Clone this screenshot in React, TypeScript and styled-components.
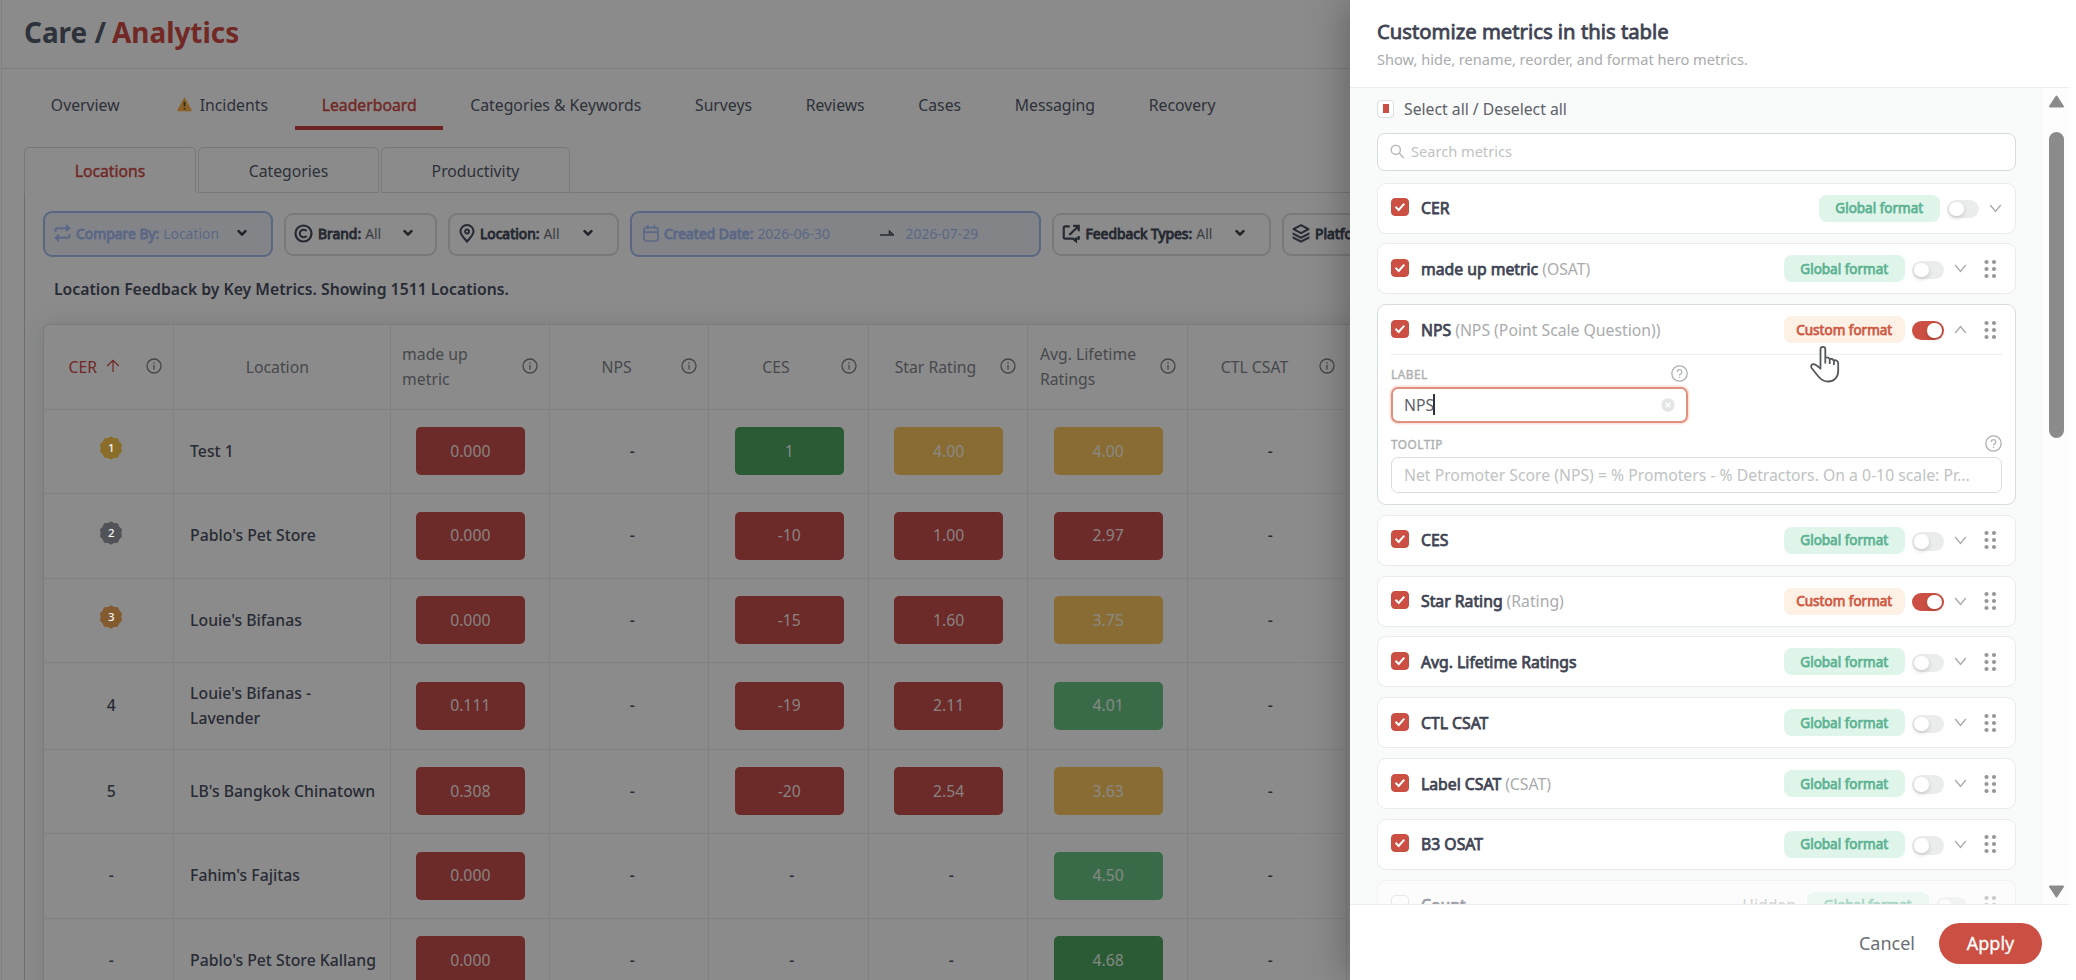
import React from "react";
import styled, { createGlobalStyle, css } from "styled-components";

const GlobalStyle = createGlobalStyle`
  *, *::before, *::after { box-sizing: border-box; }
  html, body { margin: 0; padding: 0; background: #fff; }
  body { overflow: hidden; font-family: "Noto Sans", "Open Sans", sans-serif; font-size: 15.75px; color: #3f4453; }
`;

/* ---------- page ---------- */

const Page = styled.div`
  position: relative;
  width: 2076px;
  height: 980px;
  overflow: hidden;
  background: #fff;
`;

const Content = styled.div`
  height: 980px;
  margin-left: 1px;
  border-left: 1px solid #ececec;
  display: flex;
  flex-direction: column;
`;

const TopBar = styled.header`
  flex: none;
  height: 69px;
  padding: 0 0 4px 22px;
  display: flex;
  align-items: center;
  gap: 6px;
  border-bottom: 1px solid #e6e6e6;
  font-size: 27.9px;
  font-weight: 700;
  color: #545c6d;
`;

const Accent = styled.span`
  color: #d14b47;
`;

const TabBar = styled.nav`
  flex: none;
  display: flex;
  height: 61px;
  margin: 0 0 17px 22px;
  padding-top: 12px;
`;

const Tab = styled.button<{ $active?: boolean }>`
  display: flex;
  align-items: center;
  gap: 8px;
  padding: 2px 26.85px 0;
  border: 0;
  border-bottom: 4.5px solid ${(p) => (p.$active ? "#c8413d" : "transparent")};
  background: none;
  font: inherit;
  color: ${(p) => (p.$active ? "#d04945" : "#545a6b")};
  ${(p) => p.$active && css`-webkit-text-stroke: 0.4px #d04945;`}
`;

const SubTabs = styled.div`
  flex: none;
  display: flex;
  gap: 2px;
  height: 46px;
  margin-left: 22px;
`;

const SubTab = styled.button<{ $active?: boolean; $w: number }>`
  width: ${(p) => p.$w}px;
  padding: 2px 0 0;
  border: 1px solid #dedede;
  border-bottom-color: ${(p) => (p.$active ? "transparent" : "#dedede")};
  border-radius: 5px 5px 0 0;
  background: none;
  font: inherit;
  color: ${(p) => (p.$active ? "#d04945" : "#545a6b")};
  ${(p) => p.$active && css`-webkit-text-stroke: 0.4px #d04945;`}
`;

const SubTabsRest = styled.div`
  flex: 1;
  margin-left: -2px;
  border-bottom: 1px solid #dedede;
`;

const Panel = styled.main`
  flex: 1;
  margin-left: 22px;
  padding: 18px 0 0 18px;
  border-left: 1px solid #c9c9c9;
`;

const Filters = styled.div`
  display: flex;
  align-items: center;
  gap: 11px;
  height: 46px;
`;

const Filter = styled.div<{ $w: number; $active?: boolean }>`
  flex: none;
  width: ${(p) => p.$w}px;
  height: ${(p) => (p.$active ? 46 : 43)}px;
  display: flex;
  align-items: center;
  padding: 0 0 1.5px ${(p) => (p.$active ? 9 : 8)}px;
  border: ${(p) => (p.$active ? "2px solid #a6bdf0" : "2px solid #dfdfdf")};
  border-radius: 9px;
  background: ${(p) => (p.$active ? "#eff3f8" : "#fff")};
  color: ${(p) => (p.$active ? "#a8bef6" : "#454b5c")};
  font-size: 13.9px;
  white-space: nowrap;
  svg { flex: none; }
`;

const FilterName = styled.b`
  margin-left: 5px;
  font-weight: 400;
  -webkit-text-stroke: 0.9px currentColor;
`;

const FilterValue = styled.span<{ $w?: number; $active?: boolean }>`
  margin-left: 4px;
  width: ${(p) => (p.$w ? p.$w + "px" : "auto")};
  color: ${(p) => (p.$active ? "inherit" : "#6b6f7a")};
`;

const Summary = styled.h2`
  margin: 0;
  padding: 19px 0 0 11px;
  height: 67px;
  font-size: 15.75px;
  line-height: 26px;
  font-weight: 600;
  color: #4a5062;
`;

const Table = styled.div`
  width: 1500px;
  height: 800px;
  border-left: 1px solid #e2e2e2;
  border-top: 1px solid #e2e2e2;
  border-radius: 6px 0 0 0;
  box-shadow: 0 0 22px rgba(40, 60, 80, 0.15);
`;

const Row = styled.div<{ $h: number }>`
  display: grid;
  grid-template-columns: 129.6px 217px 159.4px 159.5px 159.5px 159.5px 159.5px 159.5px;
  height: ${(p) => p.$h}px;
`;

const Cell = styled.div`
  display: flex;
  align-items: center;
  justify-content: center;
  border-right: 1px solid #ececec;
  border-bottom: 1px solid #ececec;
  padding: 0;
  line-height: 25px;
  color: #4a5062;
`;

const PlainCell = styled(Cell)`
  padding-left: 6px;
  font-weight: 500;
`;

const ScoreCell = styled(Cell)`
  padding-left: 1px;
`;

const NameCell = styled(Cell)`
  justify-content: flex-start;
  padding-left: 16.5px;
  font-weight: 500;
`;

const HeadCell = styled(Cell)<{ $noInfo?: boolean }>`
  padding: 1px ${(p) => (p.$noInfo ? 20 : 11)}px 0 11.5px;
  gap: 10px;
  color: #82868e;
  svg { flex: none; margin-bottom: 2px; }
`;

const SortedHeadCell = styled(HeadCell)`
  padding-left: 24.5px;
  gap: 9px;
  justify-content: flex-start;
  color: #d04945;
  svg:last-child { margin-left: auto; }
`;

const HeadText = styled.span<{ $wrap?: boolean }>`
  flex: 1;
  text-align: ${(p) => (p.$wrap ? "left" : "center")};
`;

const Score = styled.div<{ $tone: Tone }>`
  width: 109px;
  height: 48px;
  display: flex;
  align-items: center;
  justify-content: center;
  border-radius: 5px;
  background: ${(p) => tones[p.$tone]};
  color: rgba(255, 255, 255, 0.92);
`;

const Overlay = styled.div`
  position: absolute;
  inset: 0;
  background: rgba(0, 0, 0, 0.455);
`;

/* ---------- drawer ---------- */

const Drawer = styled.aside`
  position: absolute;
  top: 0;
  right: 0;
  width: 726px;
  height: 980px;
  display: flex;
  flex-direction: column;
  background: #fff;
  box-shadow: -6px 0 36px rgba(0, 0, 0, 0.26);
`;

const DrawerHead = styled.header`
  flex: none;
  height: 88px;
  margin-right: 7px;
  padding: 17px 0 0 27px;
  border-bottom: 1px solid #eceeee;
`;

const DrawerTitle = styled.h1`
  margin: 0;
  font-size: 20.25px;
  line-height: 28px;
  font-weight: 400;
  -webkit-text-stroke: 0.8px currentColor;
`;

const DrawerSub = styled.p`
  margin: 3px 0 0;
  font-size: 14.6px;
  line-height: 22px;
  color: #a9abad;
`;

const DrawerMain = styled.div`
  flex: none;
  display: flex;
  height: 816px;
  margin-right: 7px;
`;

const DrawerBody = styled.div`
  width: 693px;
  height: 816px;
  overflow: hidden;
  padding: 8px 27px 0;
  background: #f9fafa;
`;

const Scrollbar = styled.div`
  width: 26px;
  padding: 7px 0 6px;
  display: flex;
  flex-direction: column;
  align-items: center;
  justify-content: space-between;
  background: #fdfdfd;
`;

const ScrollThumb = styled.div`
  width: 15px;
  height: 306px;
  margin: 24px 0 auto;
  border-radius: 8px;
  background: #8b8b8b;
`;

const SelectAll = styled.label`
  display: flex;
  align-items: center;
  gap: 10px;
  height: 26px;
  color: #5d6168;
`;

const PartialBox = styled.span`
  width: 17px;
  height: 18px;
  display: flex;
  align-items: center;
  justify-content: center;
  margin-bottom: 1px;
  border: 1px solid #dcdfdf;
  border-radius: 4px;
  background: #fff;
  &::after { content: ""; width: 6px; height: 9px; background: #cb4f42; }
`;

const Search = styled.div`
  display: flex;
  align-items: center;
  gap: 6px;
  height: 38px;
  margin-top: 11px;
  padding: 0 0 2px 12px;
  border: 1px solid #d9dcdc;
  border-radius: 8px;
  background: #fff;
  font-size: 14.6px;
  color: #c0c3c3;
`;

const Cards = styled.div`
  display: flex;
  flex-direction: column;
  gap: 9.8px;
  margin-top: 11.5px;
`;

const Card = styled.section<{ $open?: boolean; $dim?: boolean }>`
  border: 1px solid ${(p) => (p.$open ? "#d9dcdc" : "#eaecec")};
  border-radius: 9px;
  background: #fff;
  padding: 0 13px;
  opacity: ${(p) => (p.$dim ? 0.5 : 1)};
`;

const CardRow = styled.div`
  display: flex;
  align-items: center;
  height: 49px;
`;

const Checkbox = styled.span<{ $on: boolean }>`
  flex: none;
  width: 18px;
  height: 18px;
  display: flex;
  align-items: center;
  justify-content: center;
  margin-bottom: 2px;
  border-radius: 4px;
  border: 1px solid ${(p) => (p.$on ? "#cb4f42" : "#d5d8d8")};
  background: ${(p) => (p.$on ? "#cb4f42" : "#fff")};
`;

const Name = styled.span`
  margin-left: 12px;
  -webkit-text-stroke: 0.75px currentColor;
`;

const Origin = styled.span`
  margin-left: 4px;
  color: #a9abad;
`;

const Tools = styled.div<{ $fixed?: boolean }>`
  margin-left: auto;
  padding-right: ${(p) => (p.$fixed ? 0 : 5.5)}px;
  display: flex;
  align-items: center;
`;

const HiddenNote = styled.span`
  margin-right: 11px;
  color: #a9abad;
`;

const Badge = styled.span<{ $custom?: boolean }>`
  width: 121.5px;
  height: 27px;
  display: flex;
  align-items: center;
  justify-content: center;
  border-radius: 8px;
  font-size: 13.5px;
  background: ${(p) => (p.$custom ? "#fdf1e6" : "#dff5e9")};
  color: ${(p) => (p.$custom ? "#cf5a45" : "#5db393")};
  -webkit-text-stroke: 0.75px currentColor;
`;

const Switch = styled.span<{ $on?: boolean }>`
  width: 31.5px;
  height: 18.5px;
  margin: 2px 0 0 7px;
  padding: 2px;
  display: flex;
  justify-content: ${(p) => (p.$on ? "flex-end" : "flex-start")};
  border-radius: 10px;
  background: ${(p) => (p.$on ? "#cb4f42" : "#ebecec")};
  &::after {
    content: "";
    width: 14.5px;
    height: 14.5px;
    border-radius: 50%;
    background: #fff;
    box-shadow: 0 2px 4px rgba(0, 0, 0, 0.16);
  }
`;

const Icon = styled.svg<{ $ml?: number }>`
  flex: none;
  display: block;
  margin-left: ${(p) => p.$ml || 0}px;
`;

const Editor = styled.div`
  height: 150px;
  padding-top: 9px;
  border-top: 1px solid #eceeee;
`;

const FieldHead = styled.div<{ $w?: number }>`
  display: flex;
  align-items: center;
  justify-content: space-between;
  width: ${(p) => (p.$w ? p.$w + "px" : "auto")};
  height: 19px;
  font-size: 11.8px;
  letter-spacing: 0.5px;
  color: #aeb1b1;
`;

const FieldName = styled.span`
  -webkit-text-stroke: 0.4px currentColor;
`;

const Field = styled.div<{ $w?: number; $focus?: boolean }>`
  display: flex;
  align-items: center;
  justify-content: space-between;
  width: ${(p) => (p.$w ? p.$w + "px" : "auto")};
  height: 36px;
  margin: 4px 0 11px;
  padding: 0 ${(p) => (p.$focus ? 11 : 12)}px 0.5px;
  border: ${(p) => (p.$focus ? "2px solid #e0907f" : "1px solid #d9dcdc")};
  border-radius: 7px;
  box-shadow: ${(p) => (p.$focus ? "0 0 0 1.5px #fae3dc" : "none")};
  color: ${(p) => (p.$focus ? "#5d6168" : "#c0c3c3")};
  white-space: nowrap;
`;

const Caret = styled.span`
  display: inline-block;
  width: 2px;
  height: 21px;
  margin-left: -1px;
  vertical-align: -4px;
  background: #2d3140;
`;

const DrawerFoot = styled.footer`
  flex: 1;
  display: flex;
  align-items: center;
  justify-content: flex-end;
  gap: 24px;
  margin-right: 7px;
  padding: 1px 27px 0 0;
  border-top: 1px solid #eceeee;
  font-size: 18px;
`;

const CancelButton = styled.button`
  border: 0;
  padding: 0 0 1px;
  background: none;
  font: inherit;
  color: #6a6e74;
`;

const ApplyButton = styled.button`
  width: 103px;
  height: 41px;
  border: 0;
  padding: 0 0 1px;
  border-radius: 21px;
  background: #cb4f42;
  font: inherit;
  color: #fff;
  -webkit-text-stroke: 0.3px #fff;
`;

const Pointer = styled.svg`
  position: absolute;
  left: 1809px;
  top: 345px;
`;

/* ---------- icons ---------- */

const Warning = () => (
  <Icon $ml={3.5} width="15" height="15" viewBox="0 0 15 15">
    <path d="M7.5 1.2 14.2 13.6H.8z" fill="#ffb545" stroke="#ffb545" strokeWidth="1.2" strokeLinejoin="round" />
    <path d="M7.5 4.8v4.800M7.500 11v1.600" stroke="#5a4545" strokeWidth="1.600" />
  </Icon>
);

const FilterChevron = ({ ml }: { ml: number }) => (
  <Icon $ml={ml} width="10" height="8" viewBox="0 0 10 8">
    <path d="M1.600 2.200 5 5.600 8.400 2.200" fill="none" stroke="#3a3f4c" strokeWidth="2.500" strokeLinecap="round" strokeLinejoin="round" />
  </Icon>
);

const CompareIcon = () => (
  <Icon width="17" height="18" viewBox="0 0 17 18" fill="none" stroke="currentColor" strokeWidth="2">
    <path d="M1.500 8V6.200A2 2 0 0 1 3.500 4.200H15M12 1l3.200 3.200L12 7.400M15.500 10v1.800a2 2 0 0 1-2 2H2M5 10.600 1.800 13.800 5 17" />
  </Icon>
);

const BrandIcon = () => (
  <Icon width="19" height="19" viewBox="0 0 19 19" fill="none" stroke="currentColor">
    <circle cx="9.500" cy="9.500" r="8" strokeWidth="2.200" />
    <path d="M12.600 7.200a3.800 3.800 0 1 0 0 4.600" strokeWidth="2" />
  </Icon>
);

const PinIcon = () => (
  <Icon $ml={1} width="16" height="19" viewBox="0 0 16 19" fill="none" stroke="currentColor">
    <path d="M8 17.500C5 13.800 1.500 11 1.500 7.500a6.500 6.500 0 0 1 13 0C14.500 11 11 13.800 8 17.500z" strokeWidth="2" />
    <circle cx="8" cy="7.500" r="2" strokeWidth="1.800" />
  </Icon>
);

const CalendarIcon = () => (
  <Icon $ml={2} width="16" height="17" viewBox="0 0 16 17" fill="none" stroke="currentColor" strokeWidth="1.700">
    <rect x="1" y="2.500" width="14" height="13.500" rx="2.500" />
    <path d="M1 7.200h14M4.700 0v4M11.300 0v4" />
  </Icon>
);

const FeedbackIcon = () => (
  <Icon width="18.500" height="19" viewBox="0 0 19 19" fill="none" stroke="currentColor" strokeWidth="2.200">
    <path d="M8 2.200H3.300a1.500 1.500 0 0 0-1.500 1.500v9.600a1.500 1.500 0 0 0 1.500 1.500h7.900l3.200 2.600v-2.600h2.800V12M7.500 11 16.500 2.200M11.500 1.600h5.700v5.700" />
  </Icon>
);

const LayersIcon = () => (
  <Icon width="18" height="19" viewBox="0 0 18 19">
    <path d="M9 1.200 16.500 5.200 9 9.200 1.500 5.200z" fill="none" stroke="currentColor" strokeWidth="2" strokeLinejoin="round" />
    <path d="M.8 8.600 9 12.800l8.200-4.200v2L9 14.800.8 10.600zM.8 12.400 9 16.600l8.200-4.200v2L9 18.600.8 14.400z" fill="currentColor" stroke="currentColor" strokeWidth=".3" />
  </Icon>
);

const RangeArrow = () => (
  <Icon width="14" height="8" viewBox="0 0 14 8">
    <path d="M0 6h13.500L9.500 2.200V6" fill="none" stroke="#4a4e5e" strokeWidth="1.500" />
  </Icon>
);

const InfoIcon = () => (
  <Icon width="16" height="16" viewBox="0 0 16 16" fill="none" stroke="#7c8087">
    <circle cx="8" cy="8" r="7" strokeWidth="1.300" />
    <path d="M8 7v4.500M8 4.300v1.500" strokeWidth="1.300" />
  </Icon>
);

const SortUp = () => (
  <Icon width="14" height="14" viewBox="0 0 14 14" fill="none" stroke="#d04945" strokeWidth="1.200">
    <path d="M7 13V1.500M1.200 7 7 1.300 12.800 7" />
  </Icon>
);

const MedalWrap = styled.span`
  display: grid;
  place-items: center;
  margin-bottom: 6px;
  > * { grid-area: 1 / 1; }
`;

const MedalNumber = styled.span`
  font-size: 11.500px;
  line-height: 14px;
  color: #f4f4f4;
  z-index: 1;
`;

const Medal = ({ n, color }: { n: number; color: string }) => (
  <MedalWrap>
    <Icon width="24" height="24" viewBox="0 0 24 24">
      <path
        d="M12 .8l3 1.700 3.600.2 1.400 3.200 2.600 2.400-.8 3.700.8 3.700-2.600 2.300-1.400 3.300-3.600.2-3 1.700-3-1.700-3.600-.2L4 18l-2.600-2.300.8-3.700-.8-3.700L4 5.900l1.400-3.200L9 2.500z"
        fill={color}
        stroke={color}
        strokeLinejoin="round"
      />
    </Icon>
    <MedalNumber>{n}</MedalNumber>
  </MedalWrap>
);

const SearchIcon = () => (
  <Icon width="15" height="15" viewBox="0 0 15 15" fill="none" stroke="#b7bbbb" strokeWidth="1.500">
    <circle cx="5.800" cy="5.800" r="4.600" />
    <path d="m9.300 9.300 4.500 4.700" />
  </Icon>
);

const Check = () => (
  <svg width="12" height="10" viewBox="0 0 12 10" fill="none" stroke="#fff" strokeWidth="2">
    <path d="M1.500 4.800 4.700 8l5.600-6.400" />
  </svg>
);

const Chevron = ({ up }: { up?: boolean }) => (
  <Icon $ml={10.5} width="13" height="9" viewBox="0 0 13 9" fill="none" stroke="#a9acac" strokeWidth="1.400">
    <path d={up ? "M1.200 8 6.500 1.500 11.800 8" : "M1.200 1 6.500 7.500 11.800 1"} />
  </Icon>
);

const Drag = () => (
  <Icon $ml={16.5} width="13" height="20" viewBox="0 0 13 20" fill="#94979b">
    {[3, 10, 17].map((y) => (
      <React.Fragment key={y}>
        <circle cx="2.500" cy={y} r="2.100" />
        <circle cx="10" cy={y} r="2.100" />
      </React.Fragment>
    ))}
  </Icon>
);

const Help = () => (
  <Icon width="17" height="17" viewBox="0 0 17 17" fill="none" stroke="#aeb1b1" strokeWidth="1.300">
    <circle cx="8.500" cy="8.500" r="7.700" />
    <path d="M6.200 6.900a2.300 2.300 0 1 1 3.400 2c-.8.400-1.100.7-1.100 1.500M8.500 11.700v1.400" />
  </Icon>
);

const Clear = () => (
  <Icon width="14" height="14" viewBox="0 0 14 14">
    <circle cx="7" cy="7" r="6.700" fill="#e4e6e6" />
    <path d="m4.800 4.800 4.400 4.400M9.200 4.800 4.800 9.200" stroke="#fff" strokeWidth="1.300" />
  </Icon>
);

const ScrollArrow = ({ down }: { down?: boolean }) => (
  <Icon width="17" height="13" viewBox="0 0 17 13">
    <path
      d={down ? "M2 1.500h13L8.500 11.500z" : "M2 11.500h13L8.500 1.500z"}
      fill="#8b8b8b"
      stroke="#8b8b8b"
      strokeWidth="2"
      strokeLinejoin="round"
    />
  </Icon>
);

/* ---------- data ---------- */

type Tone = "red" | "green" | "mint" | "yellow";

const tones: Record<Tone, string> = {
  red: "#c74d4a",
  green: "#50a860",
  mint: "#6bc585",
  yellow: "#f9c760",
};

type Value = [string, Tone] | null;

const columns: { label: React.ReactNode; wrap?: boolean }[] = [
  { label: <>made up<br />metric</>, wrap: true },
  { label: "NPS" },
  { label: "CES" },
  { label: "Star Rating" },
  { label: <>Avg. Lifetime<br />Ratings</>, wrap: true },
  { label: "CTL CSAT" },
];

const rows: { rank: React.ReactNode; name: React.ReactNode; h: number; values: Value[] }[] = [
  { rank: <Medal n={1} color="#ffc94f" />, name: "Test 1", h: 84.5, values: [["0.000", "red"], null, ["1", "green"], ["4.00", "yellow"], ["4.00", "yellow"], null] },
  { rank: <Medal n={2} color="#9599a4" />, name: "Pablo's Pet Store", h: 84.5, values: [["0.000", "red"], null, ["-10", "red"], ["1.00", "red"], ["2.97", "red"], null] },
  { rank: <Medal n={3} color="#f2a556" />, name: "Louie's Bifanas", h: 84.5, values: [["0.000", "red"], null, ["-15", "red"], ["1.60", "red"], ["3.75", "yellow"], null] },
  { rank: "4", name: <>Louie's Bifanas -<br />Lavender</>, h: 86.5, values: [["0.111", "red"], null, ["-19", "red"], ["2.11", "red"], ["4.01", "mint"], null] },
  { rank: "5", name: "LB's Bangkok Chinatown", h: 84.5, values: [["0.308", "red"], null, ["-20", "red"], ["2.54", "red"], ["3.63", "yellow"], null] },
  { rank: "-", name: "Fahim's Fajitas", h: 84.5, values: [["0.000", "red"], null, null, null, ["4.50", "mint"], null] },
  { rank: "-", name: "Pablo's Pet Store Kallang", h: 84.5, values: [["0.000", "red"], null, null, null, ["4.68", "green"], null] },
];

type Metric = { name: string; origin?: string; custom?: boolean; fixed?: boolean; open?: boolean; hidden?: boolean };

const metrics: Metric[] = [
  { name: "CER", fixed: true },
  { name: "made up metric", origin: "(OSAT)" },
  { name: "NPS", origin: "(NPS (Point Scale Question))", custom: true, open: true },
  { name: "CES" },
  { name: "Star Rating", origin: "(Rating)", custom: true },
  { name: "Avg. Lifetime Ratings" },
  { name: "CTL CSAT" },
  { name: "Label CSAT", origin: "(CSAT)" },
  { name: "B3 OSAT" },
  { name: "Count", hidden: true },
];

const MetricCard = ({ m }: { m: Metric }) => (
  <Card $open={m.open} $dim={m.hidden}>
    <CardRow>
      <Checkbox $on={!m.hidden}>{!m.hidden && <Check />}</Checkbox>
      <Name>{m.name}</Name>
      {m.origin && <Origin>{m.origin}</Origin>}
      <Tools $fixed={m.fixed}>
        {m.hidden && <HiddenNote>Hidden</HiddenNote>}
        <Badge $custom={m.custom}>{m.custom ? "Custom format" : "Global format"}</Badge>
        <Switch $on={m.custom} />
        {!m.hidden && <Chevron up={m.open} />}
        {!m.fixed && <Drag />}
      </Tools>
    </CardRow>
    {m.open && (
      <Editor>
        <FieldHead $w={297}>
          <FieldName>LABEL</FieldName>
          <Help />
        </FieldHead>
        <Field $w={297} $focus>
          <span>NPS<Caret /></span>
          <Clear />
        </Field>
        <FieldHead>
          <FieldName>TOOLTIP</FieldName>
          <Help />
        </FieldHead>
        <Field>Net Promoter Score (NPS) = % Promoters - % Detractors. On a 0-10 scale: Pr...</Field>
      </Editor>
    )}
  </Card>
);

export default function App() {
  return (
    <Page>
      <GlobalStyle />
      <Content>
        <TopBar>
          <span>Care /</span>
          <Accent>Analytics</Accent>
        </TopBar>
        <TabBar>
          <Tab>Overview</Tab>
          <Tab><Warning />Incidents</Tab>
          <Tab $active>Leaderboard</Tab>
          <Tab>Categories &amp; Keywords</Tab>
          <Tab>Surveys</Tab>
          <Tab>Reviews</Tab>
          <Tab>Cases</Tab>
          <Tab>Messaging</Tab>
          <Tab>Recovery</Tab>
        </TabBar>
        <SubTabs>
          <SubTab $active $w={172}>Locations</SubTab>
          <SubTab $w={181}>Categories</SubTab>
          <SubTab $w={189}>Productivity</SubTab>
          <SubTabsRest />
        </SubTabs>
        <Panel>
          <Filters>
            <Filter $active $w={230}>
              <CompareIcon />
              <FilterName>Compare By:</FilterName>
              <FilterValue $active>Location</FilterValue>
              <FilterChevron ml={18} />
            </Filter>
            <Filter $w={153}>
              <BrandIcon />
              <FilterName>Brand:</FilterName>
              <FilterValue>All</FilterValue>
              <FilterChevron ml={22} />
            </Filter>
            <Filter $w={171}>
              <PinIcon />
              <FilterName>Location:</FilterName>
              <FilterValue>All</FilterValue>
              <FilterChevron ml={23} />
            </Filter>
            <Filter $active $w={411}>
              <CalendarIcon />
              <FilterName>Created Date:</FilterName>
              <FilterValue $active $w={123}>2026-06-30</FilterValue>
              <RangeArrow />
              <FilterValue $active>&nbsp; 2026-07-29</FilterValue>
            </Filter>
            <Filter $w={219}>
              <FeedbackIcon />
              <FilterName>Feedback Types:</FilterName>
              <FilterValue>All</FilterValue>
              <FilterChevron ml={23} />
            </Filter>
            <Filter $w={180}>
              <LayersIcon />
              <FilterName>Platforms:</FilterName>
              <FilterValue>All</FilterValue>
            </Filter>
          </Filters>
          <Summary>Location Feedback by Key Metrics. Showing 1511 Locations.</Summary>
          <Table>
            <Row $h={84.5}>
              <SortedHeadCell>
                <span>CER</span>
                <SortUp />
                <InfoIcon />
              </SortedHeadCell>
              <HeadCell $noInfo><HeadText>Location</HeadText></HeadCell>
              {columns.map((c, i) => (
                <HeadCell key={i}>
                  <HeadText $wrap={c.wrap}>{c.label}</HeadText>
                  <InfoIcon />
                </HeadCell>
              ))}
            </Row>
            {rows.map((r, i) => (
              <Row key={i} $h={r.h}>
                <PlainCell>{r.rank}</PlainCell>
                <NameCell>{r.name}</NameCell>
                {r.values.map((v, j) =>
                  v ? (
                    <ScoreCell key={j}><Score $tone={v[1]}>{v[0]}</Score></ScoreCell>
                  ) : (
                    <PlainCell key={j}>-</PlainCell>
                  )
                )}
              </Row>
            ))}
          </Table>
        </Panel>
      </Content>
      <Overlay />
      <Drawer>
        <DrawerHead>
          <DrawerTitle>Customize metrics in this table</DrawerTitle>
          <DrawerSub>Show, hide, rename, reorder, and format hero metrics.</DrawerSub>
        </DrawerHead>
        <DrawerMain>
          <DrawerBody>
            <SelectAll>
              <PartialBox />
              Select all / Deselect all
            </SelectAll>
            <Search>
              <SearchIcon />
              Search metrics
            </Search>
            <Cards>
              {metrics.map((m) => <MetricCard key={m.name} m={m} />)}
            </Cards>
          </DrawerBody>
          <Scrollbar>
            <ScrollArrow />
            <ScrollThumb />
            <ScrollArrow down />
          </Scrollbar>
        </DrawerMain>
        <DrawerFoot>
          <CancelButton>Cancel</CancelButton>
          <ApplyButton>Apply</ApplyButton>
        </DrawerFoot>
      </Drawer>
      <Pointer width="31" height="38" viewBox="0 0 31 38">
        <path
          d="M11.500 21.500V4.200a2.400 2.400 0 0 1 4.800 0v8.600c2-.8 3.600-.2 4.200 1.200 1.800-.6 3.300 0 4 1.400 2.800-.6 4.700.6 4.700 3v7.600c0 6.200-4.200 10.500-10.200 10.500-4.300 0-7-1.800-9.600-5L2.600 23c-1.400-2.400.4-4.600 3-3.600 2.500.9 4.300 2.800 5.900 4.300zM16.300 12.500v6M20.700 14v5M24.900 15.500v4.500"
          fill="#fff"
          stroke="#55585c"
          strokeWidth="1.800"
          strokeLinejoin="round"
        />
      </Pointer>
    </Page>
  );
}
